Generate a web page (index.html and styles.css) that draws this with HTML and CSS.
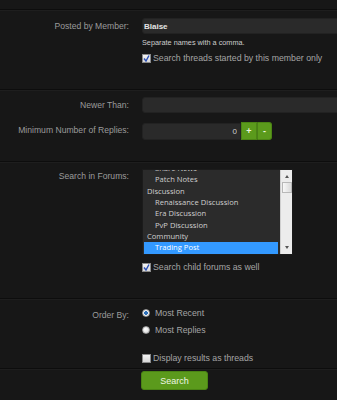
FILE: index.html
```html
<!DOCTYPE html>
<html lang="en">
<head>
    <meta charset="UTF-8">
    <title>Search Threads</title>
    <link rel="stylesheet" href="styles.css">
</head>
<body>
    <form class="search-form">
        <div class="top-gap"></div>

        <fieldset class="section section-member">
            <dl class="row">
                <dt class="label">Posted by Member:</dt>
                <dd class="field">
                    <input type="text" class="text-input" value="Blaise">
                    <p class="hint">Separate names with a comma.</p>
                    <label class="check">
                        <span class="box checked"><svg width="7" height="7" viewBox="0 0 7 7"><path d="M1 3.5 L3 6 L6 0.5" fill="none" stroke="#2b4fb5" stroke-width="1.4"/></svg></span>
                        Search threads started by this member only
                    </label>
                </dd>
            </dl>
        </fieldset>

        <fieldset class="section section-dates">
            <dl class="row">
                <dt class="label">Newer Than:</dt>
                <dd class="field"><input type="text" class="text-input"></dd>
            </dl>
            <dl class="row row-replies">
                <dt class="label">Minimum Number of Replies:</dt>
                <dd class="field spinner">
                    <input type="text" class="text-input number" value="0">
                    <button type="button" class="spin-btn">+</button>
                    <button type="button" class="spin-btn">-</button>
                </dd>
            </dl>
        </fieldset>

        <fieldset class="section section-forums">
            <dl class="row">
                <dt class="label label-top">Search in Forums:</dt>
                <dd class="field">
                    <div class="listbox">
                        <ul class="options">
                            <li class="child first">Share News</li>
                            <li class="child">Patch Notes</li>
                            <li>Discussion</li>
                            <li class="child">Renaissance Discussion</li>
                            <li class="child">Era Discussion</li>
                            <li class="child">PvP Discussion</li>
                            <li>Community</li>
                            <li class="child selected">Trading Post</li>
                        </ul>
                        <div class="scrollbar">
                            <span class="arrow up"></span>
                            <span class="thumb"></span>
                            <span class="arrow down"></span>
                        </div>
                    </div>
                    <label class="check check-child">
                        <span class="box checked"><svg width="7" height="7" viewBox="0 0 7 7"><path d="M1 3.5 L3 6 L6 0.5" fill="none" stroke="#2b4fb5" stroke-width="1.4"/></svg></span>
                        Search child forums as well
                    </label>
                </dd>
            </dl>
        </fieldset>

        <fieldset class="section section-order">
            <dl class="row">
                <dt class="label">Order By:</dt>
                <dd class="field">
                    <label class="check radio-line"><span class="radio on"></span>Most Recent</label>
                    <label class="check radio-line"><span class="radio"></span>Most Replies</label>
                    <label class="check check-threads"><span class="box"></span>Display results as threads</label>
                </dd>
            </dl>
        </fieldset>

        <fieldset class="section section-submit">
            <dl class="row">
                <dt class="label"></dt>
                <dd class="field"><button type="submit" class="submit-btn">Search</button></dd>
            </dl>
        </fieldset>
    </form>
</body>
</html>
```

FILE: styles.css
```css
* {
    box-sizing: border-box;
    margin: 0;
    padding: 0;
}

body {
    background-color: #171717;
    font-family: 'Liberation Sans', Arial, sans-serif;
    font-size: 8.6px;
    color: #9a9a9a;
    overflow: hidden;
}

.search-form {
    width: 100%;
}

.top-gap {
    height: 9px;
}

.section {
    border: none;
    border-top: 1px solid #0d0d0d;
    box-shadow: inset 0 1px 0 #1e1e1e;
}

.row {
    display: grid;
    grid-template-columns: 142px 1fr;
    align-items: start;
}

.label {
    text-align: right;
    padding-right: 13px;
    line-height: 16px;
    color: #9b9b9b;
    white-space: nowrap;
}

.label-top {
    line-height: 14px;
}

.field {
    min-width: 0;
}

.text-input {
    display: block;
    width: 230px;
    height: 16px;
    background-color: #2a2a2a;
    border: 1px solid #222;
    border-radius: 3px;
    color: #e4e4e4;
    font-family: 'Liberation Sans', Arial, sans-serif;
    font-size: 8px;
    font-weight: bold;
    padding: 0 1px;
    outline: none;
}

.hint {
    font-size: 7.3px;
    color: #cccccc;
    margin-top: 4px;
    line-height: 10px;
    white-space: nowrap;
}

.check {
    display: flex;
    align-items: center;
    gap: 2px;
    color: #a5a5a5;
    font-size: 8.75px;
    line-height: 12px;
    white-space: nowrap;
}

.box {
    display: inline-flex;
    align-items: center;
    justify-content: center;
    width: 9px;
    height: 9px;
    background: linear-gradient(#f4f4f4, #d8d8d8);
    border: 1px solid #8a8a8a;
}

.radio {
    display: inline-block;
    width: 8px;
    height: 8px;
    border-radius: 50%;
    background: radial-gradient(circle at 40% 35%, #ffffff, #d0d0d0);
    border: 1px solid #9a9a9a;
    margin-right: 1px;
}

.radio.on {
    background: radial-gradient(circle, #2d6fb8 0, #2d6fb8 1.6px, #ffffff 2.2px, #d6d6d6);
}

/* posted by member */
.section-member {
    padding: 8px 0 25px;
}

.section-member .check {
    margin-top: 4px;
}

/* dates & replies */
.section-dates {
    padding: 7px 0 21px;
}

.row-replies {
    margin-top: 9px;
}

.spinner {
    display: flex;
    align-items: center;
}

.text-input.number {
    width: 99px;
    height: 17px;
    text-align: right;
    font-weight: normal;
    color: #cfcfcf;
    padding: 0 3px;
    border-radius: 3px 0 0 3px;
}

.spin-btn {
    height: 18px;
    width: 16px;
    background-color: #5b9a1c;
    border: 1px solid #4b8414;
    color: #eaf5dd;
    font-family: 'Liberation Sans', Arial, sans-serif;
    font-size: 9px;
    font-weight: bold;
}

.spin-btn + .spin-btn {
    width: 15px;
    border-left: 1px solid #4a7f18;
    border-radius: 0 3px 3px 0;
}

/* forums list */
.section-forums {
    padding: 7px 0 25px;
}

.listbox {
    display: flex;
    width: 151px;
    height: 86px;
    background-color: #2b2b2b;
    border: 1px solid #1b1b1b;
}

.options {
    list-style: none;
    flex: 1;
    overflow: hidden;
    padding: 0 2px 0 1px;
    font-family: 'Open Sans', 'Noto Sans', sans-serif;
    font-size: 7.6px;
    color: #cfcfcf;
}

.options li {
    height: 11.33px;
    line-height: 11.33px;
    padding-left: 3px;
    white-space: nowrap;
}

.options li.child {
    padding-left: 11px;
}

.options li.first {
    margin-top: -7px;
}

.options li.selected {
    background-color: #3399ff;
    color: #ffffff;
}

.scrollbar {
    width: 12px;
    display: flex;
    flex-direction: column;
    align-items: center;
    background-color: #ececec;
    border-left: 1px solid #cfcfcf;
}

.arrow {
    width: 0;
    height: 0;
    border-left: 2.5px solid transparent;
    border-right: 2.5px solid transparent;
}

.arrow.up {
    border-bottom: 3px solid #555;
    margin-top: 5px;
}

.arrow.down {
    border-top: 3px solid #555;
    margin-top: auto;
    margin-bottom: 5px;
}

.thumb {
    width: 10px;
    height: 11px;
    margin-top: 4px;
    background: linear-gradient(90deg, #f8f8f8, #dadada);
    border: 1px solid #b8b8b8;
}

.check-child {
    margin-top: 6px;
}

/* order */
.section-order {
    padding: 8px 0 4px;
}

.radio-line {
    line-height: 12px;
    gap: 4px;
}

.radio-line + .radio-line {
    margin-top: 5px;
}

.check-threads {
    margin-top: 16px;
}

/* submit */
.section-submit {
    padding: 2px 0 10px;
}

.submit-btn {
    width: 67px;
    height: 19px;
    margin-left: -1px;
    background-color: #5b9a1c;
    border: 1px solid #4a8414;
    border-radius: 3px;
    color: #eef6e4;
    font-family: 'Liberation Sans', Arial, sans-serif;
    font-size: 9px;
}
```
